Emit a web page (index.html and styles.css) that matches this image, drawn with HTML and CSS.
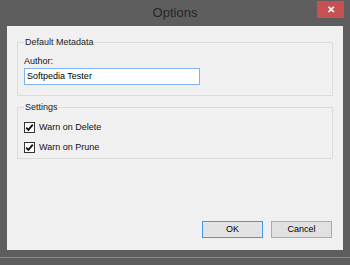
FILE: index.html
```html
<!DOCTYPE html>
<html>
<head>
<meta charset="utf-8">
<link rel="stylesheet" href="styles.css">
</head>
<body>
<div class="window">
  <div class="titlebar">
    <span></span>
    <span class="title">Options</span>
    <span class="close">&#x2715;</span>
  </div>
  <div class="client">
    <fieldset class="group group-meta">
      <legend>Default Metadata</legend>
      <div class="field-label">Author:</div>
      <div class="textbox">Softpedia Tester</div>
    </fieldset>
    <fieldset class="group group-settings">
      <legend>Settings</legend>
      <div class="check-row">
        <span class="checkbox"><svg width="9" height="9" viewBox="0 0 9 9"><path d="M1.2 4.6 L3.4 6.8 L7.8 1.6" fill="none" stroke="#111" stroke-width="1.8"/></svg></span>
        <span>Warn on Delete</span>
      </div>
      <div class="check-row">
        <span class="checkbox"><svg width="9" height="9" viewBox="0 0 9 9"><path d="M1.2 4.6 L3.4 6.8 L7.8 1.6" fill="none" stroke="#111" stroke-width="1.8"/></svg></span>
        <span>Warn on Prune</span>
      </div>
    </fieldset>
    <div class="buttons">
      <div class="btn btn-default">OK</div>
      <div class="btn">Cancel</div>
    </div>
  </div>
</div>
</body>
</html>
```
FILE: styles.css
```css
html, body {
  margin: 0;
  padding: 0;
}
body {
  width: 350px;
  height: 265px;
  background: #5e5e5e;
  font-family: "Liberation Sans", Arial, sans-serif;
  font-size: 9px;
  color: #111;
  overflow: hidden;
}
.window {
  width: 350px;
  height: 258px;
  box-sizing: border-box;
  background: #5e5e5e;
  border-bottom: 1px solid #8a8a8a;
  padding: 0 7px 7px 7px;
  display: flex;
  flex-direction: column;
}
.titlebar {
  height: 26px;
  display: grid;
  grid-template-columns: 1fr auto 1fr;
  align-items: start;
}
.title {
  font-size: 13px;
  line-height: 26px;
  color: #262626;
}
.close {
  justify-self: end;
  margin-top: 1px;
  margin-right: -1px;
  width: 27px;
  height: 17px;
  background: #c75050;
  color: #fff;
  font-size: 10px;
  font-weight: bold;
  line-height: 17px;
  text-align: center;
}
.client {
  flex: 1;
  background: #f0f0f0;
  padding: 11px 10px 12px 10px;
  display: flex;
  flex-direction: column;
}
.group {
  margin: 0;
  border: 1px solid #dcdcdc;
  padding: 0 6px;
  min-width: 0;
}
.group legend {
  padding: 0 1px;
  line-height: 11px;
  color: #222;
}
.group-meta {
  padding-top: 7px;
  padding-bottom: 10px;
}
.field-label {
  line-height: 12px;
  margin-bottom: 1px;
}
.textbox {
  width: 176px;
  height: 17px;
  box-sizing: border-box;
  border: 1px solid #7eb4ea;
  background: #fff;
  padding: 0 2px;
  line-height: 15px;
  color: #000;
}
.group-settings {
  margin-top: 6px;
  padding-top: 7px;
  padding-bottom: 4px;
  display: flex;
  flex-direction: column;
  gap: 6px;
}
.check-row {
  height: 14px;
  display: flex;
  align-items: center;
  gap: 4px;
}
.checkbox {
  width: 11px;
  height: 11px;
  box-sizing: border-box;
  border: 1px solid #333;
  background: #fff;
  display: flex;
  align-items: center;
  justify-content: center;
}
.buttons {
  margin-top: auto;
  display: flex;
  justify-content: flex-end;
  gap: 8px;
  padding-right: 1px;
}
.btn {
  width: 61px;
  height: 17px;
  box-sizing: border-box;
  border: 1px solid #acacac;
  background: #e1e1e1;
  text-align: center;
  line-height: 15px;
  color: #000;
}
.btn-default {
  width: 61px;
  border-color: #3c9cf0;
  background: #e3e3e3;
}
```
